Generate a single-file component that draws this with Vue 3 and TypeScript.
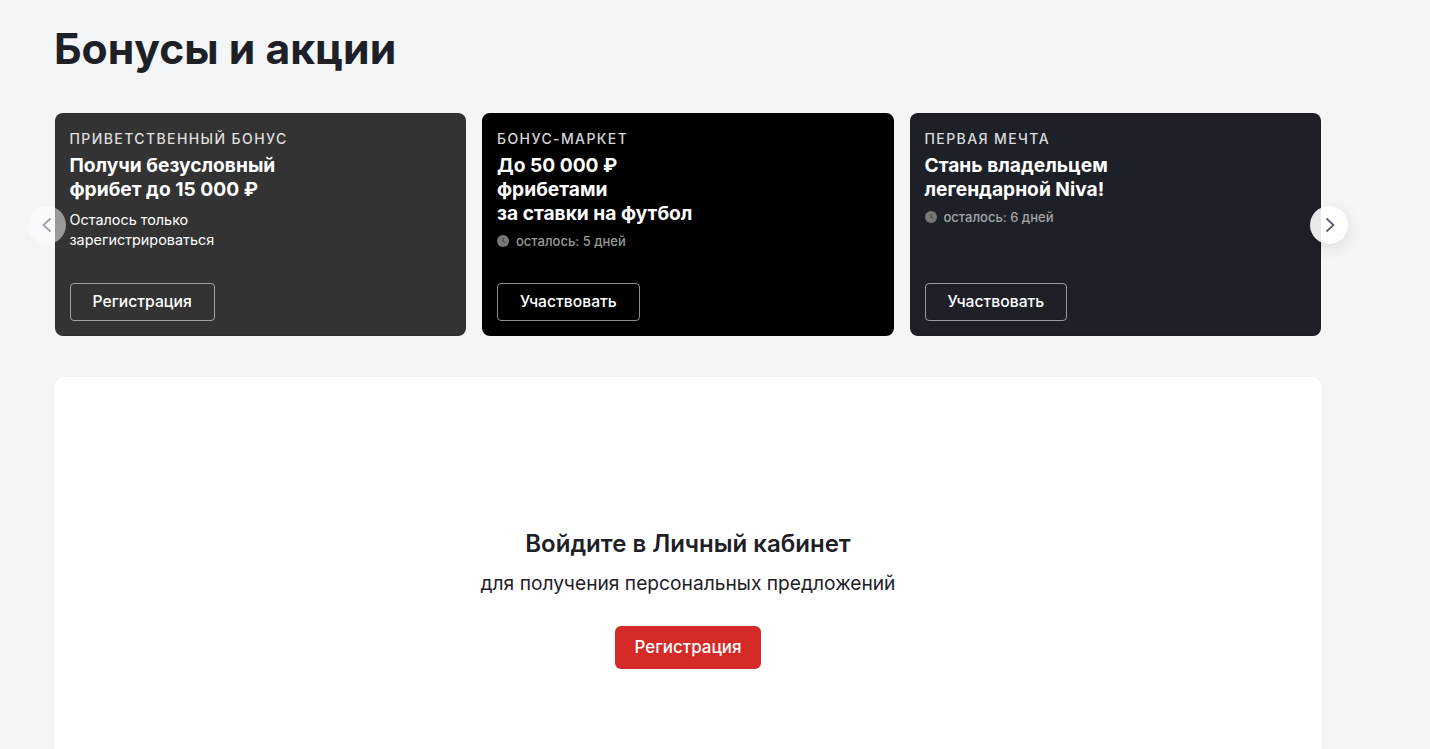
<script setup lang="ts">
interface Promo {
  label: string;
  title: string[];
  desc?: string[];
  days?: string;
  action: string;
  bg: string;
}

const promos: Promo[] = [
  {
    label: "Приветственный бонус",
    title: ["Получи безусловный", "фрибет до 15 000 ₽"],
    desc: ["Осталось только", "зарегистрироваться"],
    action: "Регистрация",
    bg: "#333333",
  },
  {
    label: "Бонус-маркет",
    title: ["До 50 000 ₽", "фрибетами", "за ставки на футбол"],
    days: "осталось: 5 дней",
    action: "Участвовать",
    bg: "#000000",
  },
  {
    label: "Первая мечта",
    title: ["Стань владельцем", "легендарной Niva!"],
    days: "осталось: 6 дней",
    action: "Участвовать",
    bg: "#1e2028",
  },
];
</script>

<template>
  <main class="page">
    <h1 class="page-title">Бонусы и акции</h1>

    <section class="carousel">
      <button class="arrow arrow-prev" aria-label="Назад">
        <svg width="12" height="16" viewBox="0 0 12 16" fill="none">
          <path d="M9.5 1.5 2.5 8l7 6.5" stroke="#9aa0ad" stroke-width="1.8" />
        </svg>
      </button>

      <article v-for="p in promos" :key="p.label" class="promo" :style="{ background: p.bg }">
        <div class="promo-label">{{ p.label }}</div>
        <div class="promo-title">
          <div v-for="line in p.title" :key="line">{{ line }}</div>
        </div>
        <div v-if="p.desc" class="promo-desc">
          <div v-for="line in p.desc" :key="line">{{ line }}</div>
        </div>
        <div v-if="p.days" class="promo-days">
          <svg width="12" height="12" viewBox="0 0 12 12">
            <circle cx="6" cy="6" r="6" fill="#777" />
            <path d="M6 2.8V6l2.2 1.6" fill="none" stroke="#000" stroke-opacity=".55" stroke-width="1" />
          </svg>
          <span>{{ p.days }}</span>
        </div>
        <button class="promo-btn">{{ p.action }}</button>
      </article>

      <button class="arrow arrow-next" aria-label="Вперёд">
        <svg width="12" height="16" viewBox="0 0 12 16" fill="none">
          <path d="M3.5 1.5 10.5 8l-7 6.5" stroke="#565d6e" stroke-width="1.8" />
        </svg>
      </button>
    </section>

    <section class="login">
      <h2 class="login-title">Войдите в Личный кабинет</h2>
      <p class="login-sub">для получения персональных предложений</p>
      <button class="login-btn">Регистрация</button>
    </section>
  </main>
</template>

<style scoped>
.page {
  box-sizing: border-box;
  width: 1322px;
  padding: 21px 0 0 54px;
  font-family: Inter, "Noto Sans", sans-serif;
  color: #1d2027;
}

.page-title {
  margin: 0;
  font-size: 42.67px;
  line-height: 56px;
  font-weight: 700;
}

.carousel {
  position: relative;
  display: grid;
  grid-template-columns: repeat(3, 1fr);
  gap: 16px;
  margin: 36px 1px 0 0.5px;
}

.promo {
  box-sizing: border-box;
  height: 222.5px;
  padding: 16px 14px 14px;
  display: flex;
  flex-direction: column;
  align-items: flex-start;
  border-radius: 8px;
  border: 1px solid rgba(0, 0, 0, 0.08);
  color: #fff;
}

.promo-label {
  font-size: 14px;
  line-height: 18px;
  font-weight: 500;
  letter-spacing: 1.4px;
  text-transform: uppercase;
  color: rgba(255, 255, 255, 0.85);
}

.promo-title {
  margin-top: 5px;
  font-size: 19.2px;
  line-height: 24px;
  font-weight: 700;
}

.promo-desc {
  margin-top: 9px;
  font-size: 14.4px;
  line-height: 20px;
}

.promo-days {
  display: flex;
  align-items: center;
  gap: 7px;
  margin-top: 7px;
  font-size: 13px;
  line-height: 18px;
  font-weight: 500;
  color: rgba(255, 255, 255, 0.6);
}

.promo-btn {
  margin-top: auto;
  height: 38px;
  padding: 0 22px;
  background: transparent;
  border: 1px solid rgba(255, 255, 255, 0.55);
  border-radius: 4px;
  font-family: inherit;
  font-size: 15.7px;
  font-weight: 500;
  color: #fff;
}

.arrow {
  position: absolute;
  top: 93px;
  z-index: 2;
  width: 38px;
  height: 38px;
  padding: 0;
  display: flex;
  align-items: center;
  justify-content: center;
  border: 0;
  border-radius: 50%;
}

.arrow-prev {
  left: -27px;
  background: rgba(255, 255, 255, 0.5);
}

.arrow-next {
  right: -27px;
  background: rgba(255, 255, 255, 0.9);
  box-shadow: 0 4px 16px rgba(0, 0, 0, 0.1);
}

.login {
  height: 420px;
  margin-top: 41.5px;
  display: flex;
  flex-direction: column;
  align-items: center;
  background: #fff;
  border-radius: 10px;
  box-shadow: 0 2px 8px rgba(0, 0, 0, 0.02);
}

.login-title {
  margin: 151px 0 0;
  font-size: 24px;
  line-height: 32px;
  font-weight: 600;
}

.login-sub {
  margin: 11px 0 0;
  font-size: 19.2px;
  line-height: 24px;
}

.login-btn {
  margin-top: 31px;
  height: 43px;
  width: 146px;
  padding: 0 0 2px;
  background: #d52b28;
  border: 0;
  border-radius: 6px;
  font-family: inherit;
  font-size: 16.96px;
  font-weight: 500;
  color: #fff;
}
</style>

<style>
html,
body {
  background: #f4f5f7;
  overflow: hidden;
}
</style>
